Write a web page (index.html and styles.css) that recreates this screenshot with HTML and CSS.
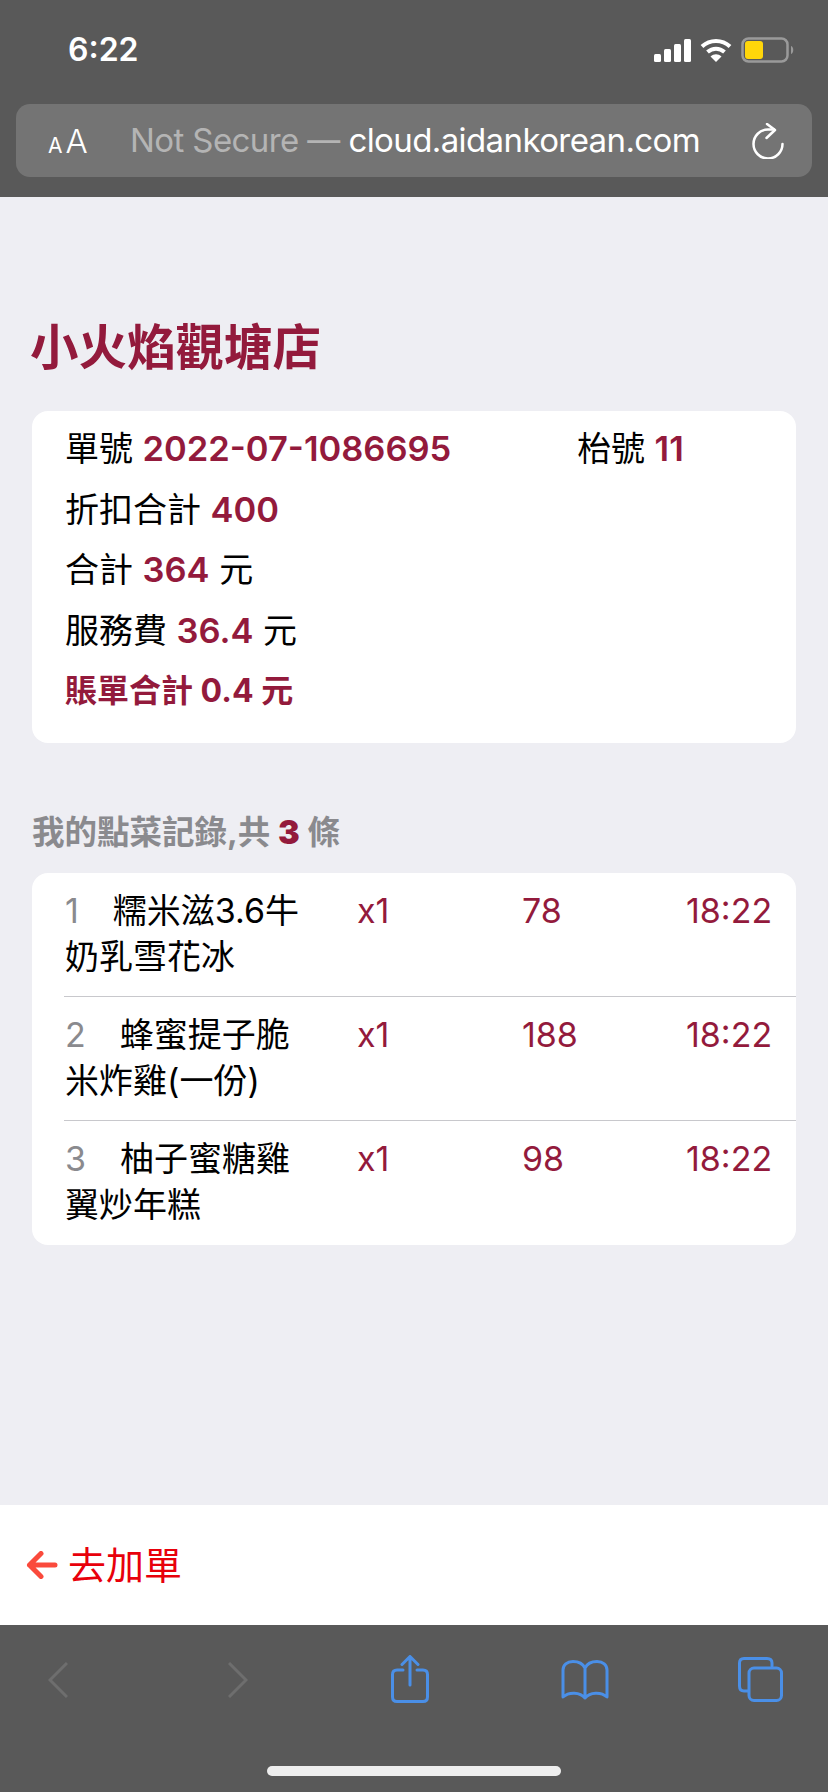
FILE: index.html
```html
<!DOCTYPE html>
<html lang="zh-Hant">
  <head>
    <meta charset="UTF-8" />
    <meta name="viewport" content="width=device-width, initial-scale=1.0" />
    <title>小火焰觀塘店</title>
    <link rel="stylesheet" href="styles.css">
  </head>
  <body>
    <header class="browser-top">
      <div class="status-bar">
        <span class="clock">6:22</span>
        <div class="status-icons">
          <svg class="signal" width="37" height="23" viewBox="0 0 37 23">
            <rect x="0" y="15" width="7" height="8" rx="1.5" />
            <rect x="10" y="10" width="7" height="13" rx="1.5" />
            <rect x="20" y="5" width="7" height="18" rx="1.5" />
            <rect x="30" y="0" width="7" height="23" rx="1.5" />
          </svg>
          <svg class="wifi" width="32" height="24" viewBox="0 0 32 24">
            <path d="M2 8.500C10 1 22 1 30 8.500" />
            <path d="M7.500 14C12.500 9.500 19.500 9.500 24.500 14" />
            <path class="wifi-dot" d="M16 24L10.500 18.500C14 15.600 18 15.600 21.500 18.500Z" />
          </svg>
          <svg class="battery" width="55" height="26" viewBox="0 0 55 26">
            <rect class="battery-case" x="1.500" y="1.500" width="45" height="23" rx="6" />
            <rect class="battery-fill" x="4" y="4" width="18" height="18" rx="3" />
            <path class="battery-nub" d="M50 9C53 10 53 16 50 17Z" />
          </svg>
        </div>
      </div>
      <div class="url-bar">
        <span class="text-size"><small>A</small>A</span>
        <span class="url"><span class="url-dim">Not Secure —</span> cloud.aidankorean.com</span>
        <svg class="reload" width="32" height="36" viewBox="0 0 32 36">
          <path d="M22 6.500H16A14.500 14.500 0 1 0 30.500 21" />
          <path d="M15 1L23 7L14.500 15" />
        </svg>
      </div>
    </header>

    <main class="page">
      <h1 class="shop-name">小火焰觀塘店</h1>
      <section class="card summary">
        <div class="summary-row">
          <p class="order-no">單號 <b>2022-07-1086695</b></p>
          <p>枱號 <b>11</b></p>
        </div>
        <p>折扣合計 <b>400</b></p>
        <p>合計 <b>364</b> 元</p>
        <p>服務費 <b>36.4</b> 元</p>
        <p class="grand-total">賬單合計 0.4 元</p>
      </section>

      <h2 class="list-title">我的點菜記錄,共 <b>3</b> 條</h2>
      <section class="card orders">
        <div class="order">
          <p class="dish"><span class="num">1</span>糯米滋3.6牛奶乳雪花冰</p>
          <p class="qty">x1</p>
          <p class="price">78</p>
          <p class="time">18:22</p>
        </div>
        <div class="order">
          <p class="dish"><span class="num">2</span>蜂蜜提子脆米炸雞(一份)</p>
          <p class="qty">x1</p>
          <p class="price">188</p>
          <p class="time">18:22</p>
        </div>
        <div class="order">
          <p class="dish"><span class="num">3</span>柚子蜜糖雞翼炒年糕</p>
          <p class="qty">x1</p>
          <p class="price">98</p>
          <p class="time">18:22</p>
        </div>
      </section>
    </main>

    <div class="add-more">
      <svg class="back-arrow" width="32" height="28" viewBox="0 0 32 28">
        <path d="M15 2.500L3.500 14L15 25.500M3.500 14H29" />
      </svg>
      <a href="#">去加單</a>
    </div>

    <footer class="browser-bottom">
      <div class="toolbar">
        <svg class="chevron" width="20" height="36" viewBox="0 0 20 36"><path d="M19 1L2 18L19 35" /></svg>
        <svg class="chevron forward" width="20" height="36" viewBox="0 0 20 36"><path d="M1 1L18 18L1 35" /></svg>
        <svg class="tool share" width="38" height="48" viewBox="0 0 38 48">
          <path d="M12 15H6C3 15 1.500 16.500 1.500 19.500V42C1.500 45 3 46.500 6 46.500H32C35 46.500 36.500 45 36.500 42V19.500C36.500 16.500 35 15 32 15H26" />
          <path d="M19 30V2M11 9.500L19 1.500L27 9.500" />
        </svg>
        <svg class="tool book" width="48" height="40" viewBox="0 0 48 40">
          <path d="M24 8C22 4 18 1.500 12 1.500C6 1.500 2 5 2 10V37C8 31.500 19 32 24 38C29 32 40 31.500 46 37V10C46 5 42 1.500 36 1.500C30 1.500 26 4 24 8V38" />
        </svg>
        <svg class="tool tabs" width="45" height="45" viewBox="0 0 45 45">
          <path d="M34 9V6C34 3 32 1.500 29 1.500H6C3 1.500 1.500 3 1.500 6V29C1.500 32 3 34 6 34H10" />
          <rect x="11" y="11" width="32.500" height="32.500" rx="5" />
        </svg>
      </div>
      <div class="home-bar"></div>
    </footer>
  </body>
</html>
```

FILE: styles.css
```css
* {
  box-sizing: border-box;
}

body {
  margin: 0;
  height: 1792px;
  display: flex;
  flex-direction: column;
  overflow: hidden;
  background-color: #eeeef3;
  color: #000;
  font-family: Inter, "Noto Sans CJK TC", sans-serif;
  font-size: 34px;
}

p, h1, h2 {
  margin: 0;
}

/* browser chrome */
.browser-top {
  height: 197px;
  padding: 0 16px;
  background-color: #595959;
  color: #fff;
}

.status-bar {
  height: 104px;
  padding: 37px 16px 0 52px;
  display: flex;
  justify-content: space-between;
  align-items: flex-start;
}

.clock {
  font-size: 32px;
  font-weight: 600;
  line-height: 26px;
}

.status-icons {
  display: flex;
  align-items: center;
  gap: 9px;
}

.signal {
  fill: #fff;
}

.wifi {
  fill: none;
  stroke: #fff;
  stroke-width: 4;
}

.wifi .wifi-dot {
  fill: #fff;
  stroke: none;
}

.battery-case {
  fill: none;
  stroke: #9a9a9a;
  stroke-width: 2.500;
}

.battery-fill {
  fill: #ffd60a;
}

.battery-nub {
  fill: #9a9a9a;
}

.url-bar {
  height: 73px;
  padding: 0 28px 0 32px;
  display: flex;
  align-items: center;
  background-color: #747474;
  border-radius: 14px;
}

.text-size {
  width: 82px;
  font-size: 33px;
  font-weight: 300;
  line-height: 40px;
  padding-top: 6px;
}

.text-size small {
  font-size: 21px;
  font-weight: 400;
  margin-right: 3px;
}

.url {
  flex: 1;
  padding-bottom: 2px;
  font-size: 33px;
  letter-spacing: -0.6px;
  white-space: nowrap;
}

.url-dim {
  color: #b4b4b4;
}

.reload {
  fill: none;
  stroke: #fff;
  stroke-width: 2.500;
  stroke-linecap: round;
  stroke-linejoin: round;
}

/* page */
.page {
  flex: 1;
  padding: 121px 32px 0;
}

.shop-name {
  margin: 0 0 33px -2px;
  font-size: 48.500px;
  line-height: 60px;
  font-weight: 700;
  color: #931a3c;
}

.card {
  background-color: #fff;
  border-radius: 16px;
}

.summary {
  height: 332px;
  padding: 8px 0 0 33px;
}

.summary p {
  line-height: 60.500px;
}

.summary b {
  font-size: 34.500px;
  font-weight: 600;
  color: #931a3c;
}

.summary-row {
  display: flex;
}

.order-no {
  width: 512px;
}

.summary .grand-total {
  font-size: 32px;
  font-weight: 700;
  color: #931a3c;
}

.list-title {
  margin: 70px 0 20px;
  font-size: 32.500px;
  line-height: 40px;
  font-weight: 700;
  color: #8a8a8e;
}

.list-title b {
  color: #931a3c;
}

.orders {
  height: 372px;
  padding-left: 32px;
}

.order {
  height: 124px;
  padding: 15px 0 0 1px;
  display: grid;
  grid-template-columns: 292px 165px 164px auto;
  align-items: start;
  line-height: 46px;
  border-bottom: 1px solid #c8c8cc;
}

.order:last-child {
  border-bottom: none;
}

.dish {
  padding-right: 47px;
}

.num {
  margin-right: 34px;
  color: #8a8a8e;
}

.qty, .price, .time {
  color: #931a3c;
}

.add-more {
  height: 120px;
  padding-left: 26px;
  display: flex;
  align-items: center;
  gap: 10px;
  background-color: #fff;
}

.back-arrow {
  fill: none;
  stroke: #fa4a3c;
  stroke-width: 5;
  stroke-linecap: round;
  stroke-linejoin: round;
}

.add-more a {
  padding-bottom: 5px;
  font-size: 38px;
  color: #e8000b;
  text-decoration: none;
}

.browser-bottom {
  height: 167px;
  background-color: #595959;
  display: flex;
  flex-direction: column;
  align-items: center;
}

.toolbar {
  width: 100%;
  height: 141px;
  padding: 30px 0 0 48px;
  display: flex;
  align-items: flex-start;
}

.chevron {
  margin-top: 7px;
  fill: none;
  stroke: #6e6e6e;
  stroke-width: 3;
}

.forward {
  margin-left: 160px;
}

.tool {
  fill: none;
  stroke: #4a8fe7;
  stroke-width: 3;
  stroke-linecap: round;
  stroke-linejoin: round;
}

.share {
  margin-left: 143px;
}

.book {
  margin: 5px 0 0 132px;
}

.tabs {
  margin: 2px 0 0 129px;
}

.home-bar {
  width: 294px;
  height: 10px;
  border-radius: 5px;
  background-color: #eee;
}
```
